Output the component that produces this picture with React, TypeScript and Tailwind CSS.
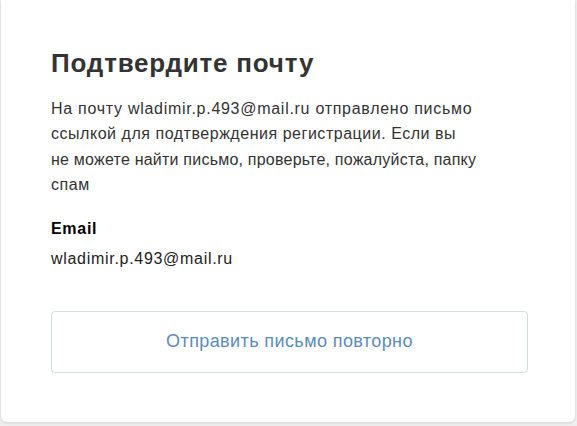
export default function App() {
  return (
    <div
      className="min-h-[426px] w-full bg-[#efefef] pl-px pr-[2px]"
      style={{ fontFamily: '"Liberation Sans", Arial, sans-serif' }}
    >
      <div className="rounded-b-md bg-white pb-[49px] pl-[50px] pr-[47px] pt-[48px] shadow-[0_1px_3px_rgba(0,0,0,0.12)]">
        <h1 className="mb-[18px] text-[26px] font-bold leading-[30px] tracking-[0.8px] text-[#333]">
          Подтвердите почту
        </h1>
        <p className="whitespace-nowrap text-[16px] leading-[25.4px] text-[#333]">
          <span className="block tracking-[0.72px]">
            На почту wladimir.p.493@mail.ru отправлено письмо
          </span>
          <span className="block tracking-[0.53px]">
            ссылкой для подтверждения регистрации. Если вы
          </span>
          <span className="block tracking-[0.22px]">
            не можете найти письмо, проверьте, пожалуйста, папку
          </span>
          <span className="block tracking-[0.6px]">спам</span>
        </p>
        <div className="mt-[18px] tracking-[0.7px]">
          <div className="text-[16px] font-bold leading-[25px] text-black">
            Email
          </div>
          <div className="mt-[5px] text-[16px] leading-[25px] text-[#222]">
            wladimir.p.493@mail.ru
          </div>
        </div>
        <button className="mt-[40px] flex h-[62px] w-full items-center justify-center rounded border border-[#d6dcdf] bg-white text-[18px] tracking-[0.4px] text-[#5b8cbd]">
          Отправить письмо повторно
        </button>
      </div>
    </div>
  );
}
